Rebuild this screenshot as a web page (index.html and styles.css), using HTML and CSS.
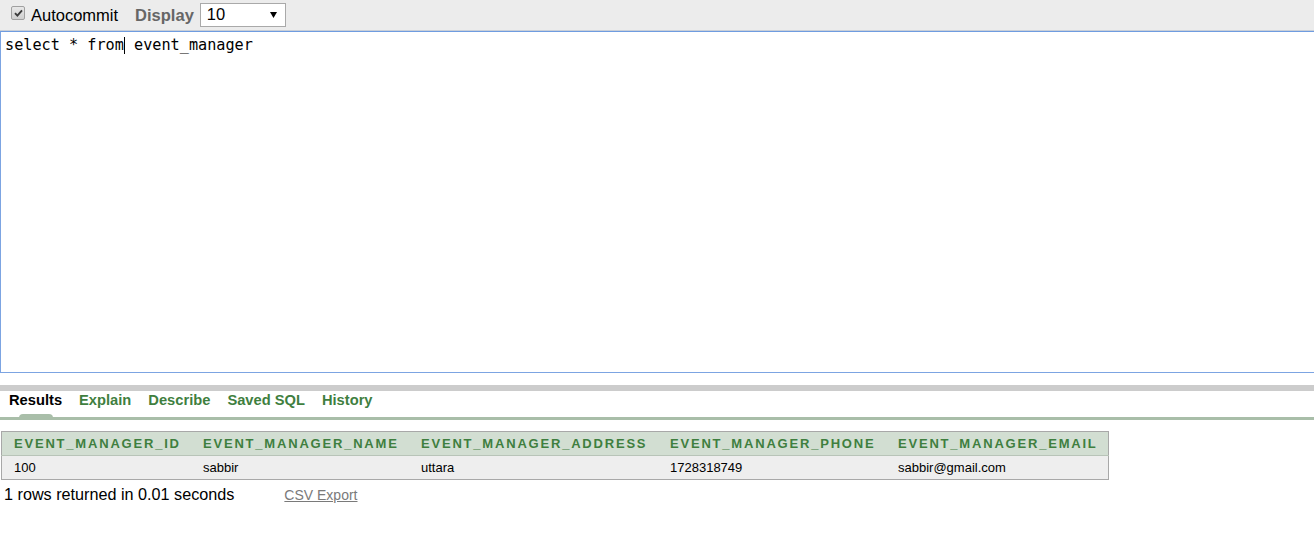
FILE: index.html
```html
<!DOCTYPE html>
<html>
<head>
<meta charset="utf-8">
<link rel="stylesheet" href="styles.css">
</head>
<body>
<div class="toolbar">
  <span class="check"><svg width="9" height="8" viewBox="0 0 9 8"><path d="M1 4.2 L3.4 6.6 L8 1.4" fill="none" stroke="#3a3a3a" stroke-width="1.9"/></svg></span>
  <span class="label">Autocommit</span>
  <span class="display">Display</span>
  <span class="select"><span class="sel-val">10</span><svg class="sel-arrow" width="7" height="6" viewBox="0 0 7 6"><path d="M0 0 H7 L3.5 6 Z" fill="#000"/></svg></span>
</div>
<div class="editor"><span class="code">select * from<span class="caret"></span> event_manager</span></div>
<div class="graybar"></div>
<div class="tabs">
  <span class="tab active">Results</span>
  <span class="tab">Explain</span>
  <span class="tab">Describe</span>
  <span class="tab">Saved SQL</span>
  <span class="tab">History</span>
</div>
<div class="tabline"></div>
<table class="results">
  <thead>
    <tr>
      <th class="c1">EVENT_MANAGER_ID</th>
      <th class="c2">EVENT_MANAGER_NAME</th>
      <th class="c3">EVENT_MANAGER_ADDRESS</th>
      <th class="c4">EVENT_MANAGER_PHONE</th>
      <th class="c5">EVENT_MANAGER_EMAIL</th>
    </tr>
  </thead>
  <tbody>
    <tr>
      <td>100</td>
      <td>sabbir</td>
      <td>uttara</td>
      <td>1728318749</td>
      <td>sabbir@gmail.com</td>
    </tr>
  </tbody>
</table>
<div class="footer">
  <span class="rows">1 rows returned in 0.01 seconds</span>
  <a class="csv" href="#">CSV Export</a>
</div>
</body>
</html>
```
FILE: styles.css
```css
html, body {
  margin: 0;
  padding: 0;
  background: #ffffff;
  overflow: hidden;
  font-family: "Liberation Sans", Arial, sans-serif;
}

.toolbar {
  height: 31px;
  background: #ececec;
  border-bottom: 1px solid #c9cfd8;
  display: flex;
  align-items: center;
  padding-left: 11px;
  box-sizing: border-box;
}

.check {
  width: 12px;
  height: 12px;
  border: 1px solid #a0a0a0;
  border-radius: 2px;
  background: linear-gradient(#e8e8e8, #cfcfcf);
  display: flex;
  align-items: center;
  justify-content: center;
  margin-top: -5px;
}

.label {
  font-size: 16.5px;
  color: #000;
  margin-left: 6px;
}

.display {
  font-size: 16.5px;
  font-weight: bold;
  color: #666666;
  margin-left: 17px;
}

.select {
  margin-left: 6px;
  width: 86px;
  height: 24px;
  box-sizing: border-box;
  border: 1px solid #a9a9a9;
  background: #fff;
  display: flex;
  align-items: center;
  justify-content: space-between;
  padding: 0 8px 0 6px;
  margin-top: -1px;
}

.sel-val {
  font-size: 16.5px;
  color: #000;
}

.sel-arrow {
  display: block;
  margin-top: 1px;
}

.editor {
  height: 342px;
  box-sizing: border-box;
  border: 1px solid #7ca4e2;
  border-top-color: #6f9ce0;
  margin-right: -10px;
  padding: 4px 4px;
}

.code {
  font-family: "DejaVu Sans Mono", "Liberation Mono", monospace;
  font-size: 15.2px;
  line-height: 18px;
  color: #000;
  white-space: pre;
}

.caret {
  display: inline-block;
  width: 0;
  height: 17px;
  border-left: 1px solid #000;
  vertical-align: -4px;
}

.graybar {
  margin-top: 12px;
  height: 6px;
  background: #cccccc;
}

.tabs {
  height: 26px;
  display: flex;
  align-items: flex-start;
  gap: 17px;
  padding-left: 9px;
  padding-top: 1px;
  box-sizing: border-box;
}

.tab {
  font-size: 14.7px;
  line-height: 17px;
  font-weight: bold;
  color: #3f7f3f;
  position: relative;
}

.tab.active {
  color: #000;
}

.tab.active::after {
  content: "";
  position: absolute;
  left: 10px;
  width: 34px;
  bottom: -9px;
  height: 4px;
  background: #a9bea9;
  border-radius: 4px 4px 0 0;
}

.tabline {
  height: 3px;
  background: #a9bea9;
}

.results {
  margin-top: 11px;
  margin-left: 1px;
  border-collapse: collapse;
  border: 1px solid #a8a8a8;
  width: 1108px;
}

.results th {
  background: #d2ded2;
  color: #3f7f3f;
  font-size: 13px;
  font-weight: bold;
  letter-spacing: 1.8px;
  text-align: left;
  height: 23px;
  padding: 0 0 0 12px;
  border-bottom: 1px solid #b8c4b8;
  white-space: nowrap;
}

.results td {
  background: #eeeeee;
  color: #000;
  font-size: 13px;
  height: 23px;
  padding: 0 0 0 12px;
  text-align: left;
}

.c1 { width: 177px; }
.c2 { width: 206px; }
.c3 { width: 237px; }
.c4 { width: 216px; }

.footer {
  display: flex;
  align-items: baseline;
  padding-left: 4px;
  padding-top: 5px;
}

.rows {
  font-size: 16.2px;
  color: #000;
}

.csv {
  margin-left: 50px;
  font-size: 14px;
  color: #7a7a7a;
  text-decoration: underline;
}
```
